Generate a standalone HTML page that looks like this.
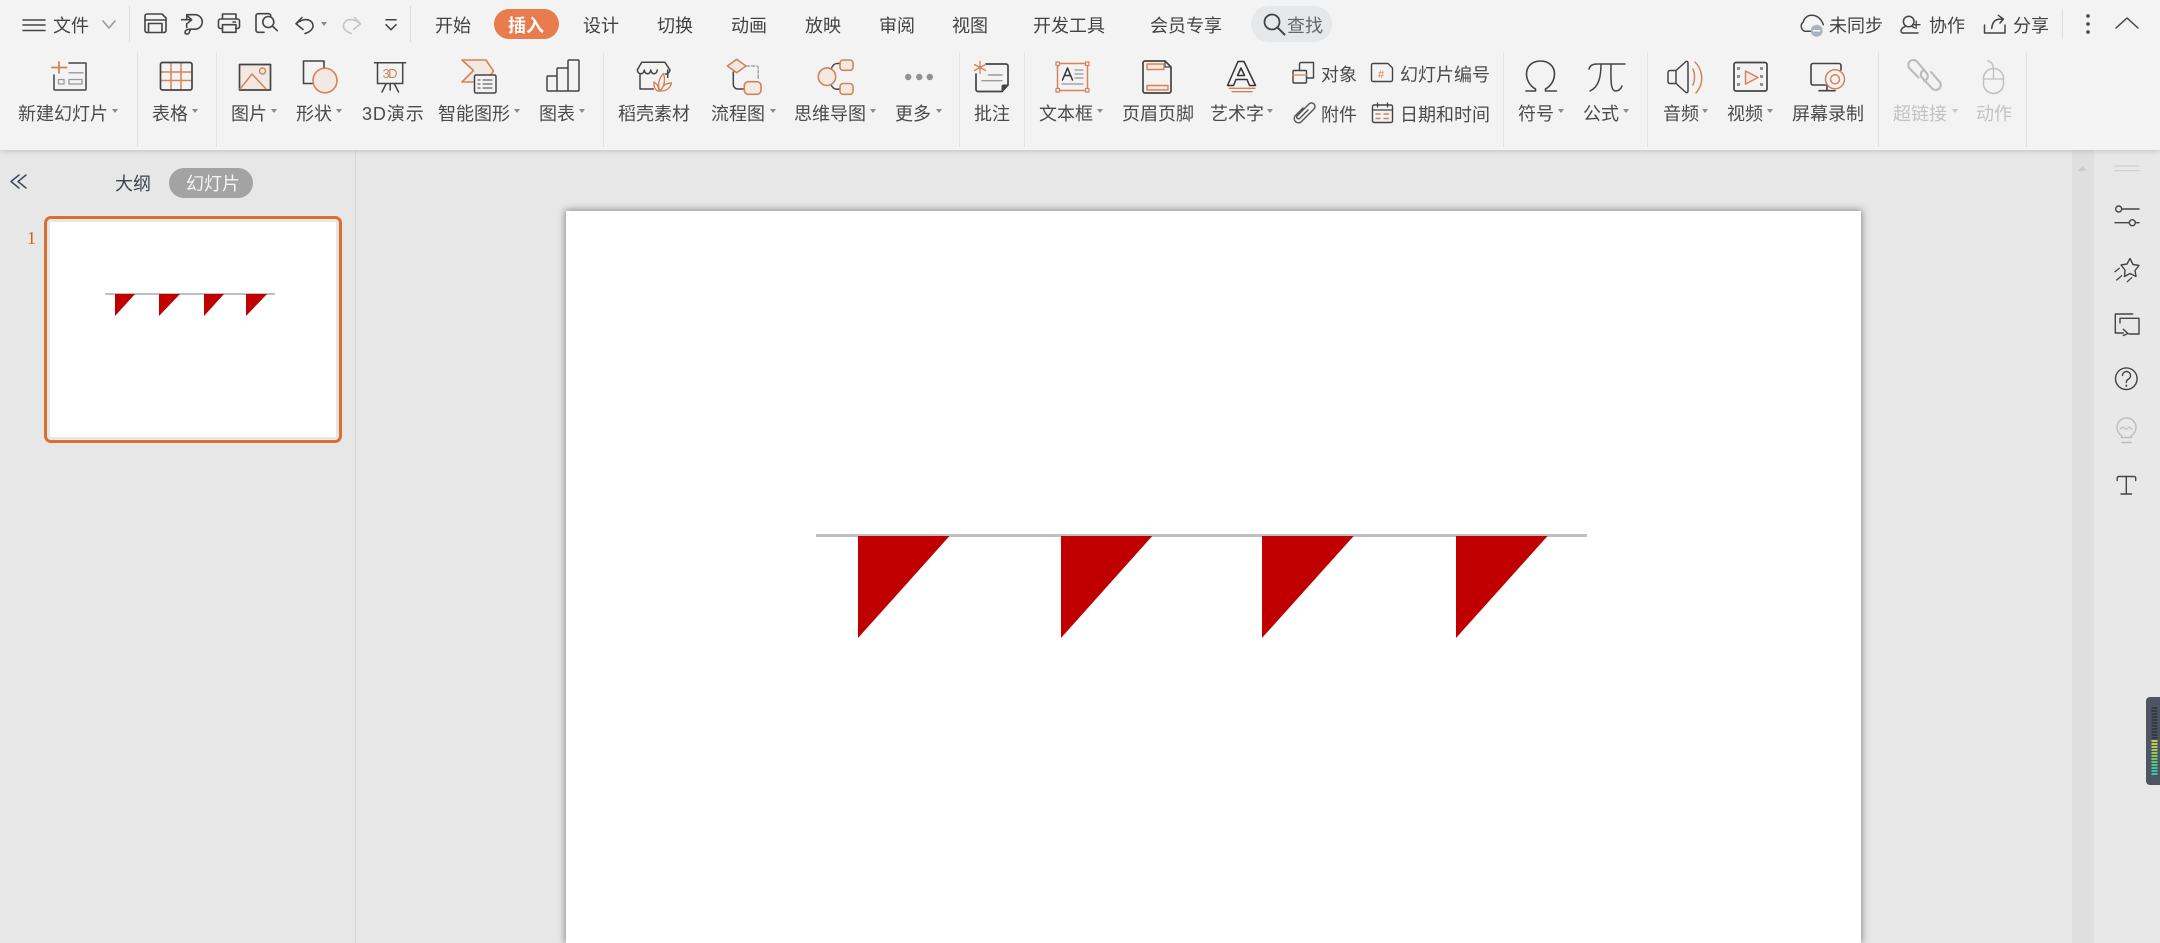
<!DOCTYPE html>
<html lang="zh-CN">
<head>
<meta charset="utf-8">
<title>WPS 演示</title>
<style>
html,body{margin:0;padding:0;width:2160px;height:943px;overflow:hidden;background:#e7e7e7;font-family:"Liberation Sans","Noto Sans CJK SC",sans-serif}
#bar{position:absolute;left:0;top:0;width:2160px;height:150px;background:#f3f3f3;box-shadow:0 1px 5px rgba(0,0,0,.16);z-index:2}
.t{position:absolute;font-size:18px;line-height:24px;white-space:nowrap;color:#4a4a4a;z-index:4}
.r{top:102px}
.g{color:#c2c2c2}
.tb{top:14px;color:#424242}
.a{position:absolute;top:109px;width:0;height:0;border-left:3.5px solid transparent;border-right:3.5px solid transparent;border-top:4px solid #8a8a8a;z-index:4}
.s{position:absolute;top:52px;height:95px;width:1px;background:#e3e3e3;z-index:3}
.s2{position:absolute;top:6px;height:36px;width:1px;background:#dedede;z-index:3}
.pill{position:absolute;z-index:3}
#ic{position:absolute;left:0;top:0;z-index:5}
#slide{position:absolute;left:566px;top:211px;width:1295px;height:732px;background:#fff;box-shadow:0 0 7px 1px #8a8a8a}
#sb{position:absolute;left:2072px;top:150px;width:22px;height:793px;background:#dfdfdf}
#rp{position:absolute;left:2094px;top:150px;width:66px;height:793px;background:#e8e8e8}
#lp{position:absolute;left:355px;top:150px;width:1px;height:793px;background:#d9d9d9}
#th{position:absolute;left:44px;top:216px;width:292px;height:221px;border:3px solid #dc6e2e;border-radius:7px;background:#fff;box-shadow:inset 0 0 0 3px #e7e7e7}
</style>
</head>
<body>
<div id="lp"></div>
<div id="sb"></div>
<div id="rp"></div>
<div id="slide"></div>
<div id="th"></div>

<div id="bar"></div>

<div class="s2" style="left:129px"></div>
<div class="s2" style="left:410px"></div>
<div class="s2" style="left:2062px;top:9px;height:30px"></div>
<div class="s" style="left:137px"></div>
<div class="s" style="left:216px"></div>
<div class="s" style="left:603px"></div>
<div class="s" style="left:959px"></div>
<div class="s" style="left:1024px"></div>
<div class="s" style="left:1503px"></div>
<div class="s" style="left:1647px"></div>
<div class="s" style="left:1878px"></div>
<div class="s" style="left:2026px"></div>

<div class="pill" style="left:494px;top:9px;width:65px;height:30px;border-radius:15px;background:#e97c4d"></div>
<div class="pill" style="left:1251px;top:6px;width:81px;height:36px;border-radius:18px;background:#e6e7e9"></div>
<div class="pill" style="left:169px;top:168px;width:84px;height:30px;border-radius:15px;background:#a3a3a3"></div>

<span class="t tb" style="left:53px">文件</span>
<span class="t tb" style="left:435px">开始</span>
<span class="t tb" style="left:508px;color:#fff;font-weight:700">插入</span>
<span class="t tb" style="left:583px">设计</span>
<span class="t tb" style="left:657px">切换</span>
<span class="t tb" style="left:731px">动画</span>
<span class="t tb" style="left:805px">放映</span>
<span class="t tb" style="left:879px">审阅</span>
<span class="t tb" style="left:952px">视图</span>
<span class="t tb" style="left:1033px">开发工具</span>
<span class="t tb" style="left:1150px">会员专享</span>
<span class="t tb" style="left:1287px;color:#666">查找</span>
<span class="t tb" style="left:1829px">未同步</span>
<span class="t tb" style="left:1929px">协作</span>
<span class="t tb" style="left:2013px">分享</span>

<span class="t r" style="left:18px">新建幻灯片</span>
<span class="t r" style="left:152px">表格</span>
<span class="t r" style="left:231px">图片</span>
<span class="t r" style="left:296px">形状</span>
<span class="t r" style="left:362px;letter-spacing:.9px">3D演示</span>
<span class="t r" style="left:438px">智能图形</span>
<span class="t r" style="left:539px">图表</span>
<span class="t r" style="left:618px">稻壳素材</span>
<span class="t r" style="left:711px">流程图</span>
<span class="t r" style="left:794px">思维导图</span>
<span class="t r" style="left:895px">更多</span>
<span class="t r" style="left:974px">批注</span>
<span class="t r" style="left:1039px">文本框</span>
<span class="t r" style="left:1122px">页眉页脚</span>
<span class="t r" style="left:1210px">艺术字</span>
<span class="t" style="left:1321px;top:63px">对象</span>
<span class="t" style="left:1321px;top:103px">附件</span>
<span class="t" style="left:1400px;top:63px">幻灯片编号</span>
<span class="t" style="left:1400px;top:103px">日期和时间</span>
<span class="t r" style="left:1518px">符号</span>
<span class="t r" style="left:1583px">公式</span>
<span class="t r" style="left:1663px">音频</span>
<span class="t r" style="left:1727px">视频</span>
<span class="t r" style="left:1792px">屏幕录制</span>
<span class="t r g" style="left:1893px">超链接</span>
<span class="t r g" style="left:1976px">动作</span>

<span class="a" style="left:112px"></span>
<span class="a" style="left:192px"></span>
<span class="a" style="left:271px"></span>
<span class="a" style="left:336px"></span>
<span class="a" style="left:514px"></span>
<span class="a" style="left:579px"></span>
<span class="a" style="left:770px"></span>
<span class="a" style="left:870px"></span>
<span class="a" style="left:936px"></span>
<span class="a" style="left:1097px"></span>
<span class="a" style="left:1267px"></span>
<span class="a" style="left:1558px"></span>
<span class="a" style="left:1623px"></span>
<span class="a" style="left:1702px"></span>
<span class="a" style="left:1767px"></span>
<span class="a" style="left:1952px;border-top-color:#c8c8c8"></span>
<span class="a" style="left:321px;top:22px"></span>

<span class="t" style="left:115px;top:172px;color:#3d4450">大纲</span>
<span class="t" style="left:186px;top:172px;color:#f4f4f4">幻灯片</span>
<span class="t" style="left:27px;top:226px;color:#d0601e;font-family:'Liberation Serif',serif;font-size:18px">1</span>

<svg id="ic" width="2160" height="943" viewBox="0 0 2160 943" xmlns="http://www.w3.org/2000/svg" fill="none" stroke-linecap="round" stroke-linejoin="round">
<!-- slide content -->
<rect x="816" y="534" width="771" height="3" fill="#bfbfbf"/>
<g fill="#c00000">
<polygon points="858,536 949.5,536 858,638"/>
<polygon points="1061,536 1152.3,536 1061,638"/>
<polygon points="1262,536 1353.7,536 1262,638"/>
<polygon points="1456,536 1547.6,536 1456,638"/>
</g>
<!-- thumbnail content -->
<rect x="105" y="293" width="170" height="2" fill="#bfbfbf"/>
<g fill="#c00000">
<polygon points="115,294 135,294 115,316"/>
<polygon points="159,294 180,294 159,316"/>
<polygon points="204,294 224,294 204,316"/>
<polygon points="246,294 267,294 246,316"/>
</g>
<path d="M19,175l-8,6.5 8,6.5M26,175l-8,6.5 8,6.5" stroke="#3d4a60" stroke-width="1.5"/>

<!-- top bar -->
<g stroke="#444" stroke-width="1.6">
<path d="M23,20H45M23,25H45M23,30.500H45"/>
<path d="M103,21l6,7 6-7" stroke="#999"/>
<path d="M147,14h15l4,4v12.500a2,2 0 0 1-2,2H147a2,2 0 0 1-2-2V16a2,2 0 0 1 2-2z"/>
<path d="M145,20h21M148.500,32V23.500h13.500V32"/>
<path d="M186.700,18.500V14.700H195a7.200,7.200 0 0 1 0,14.500H190c-2.500,0-4.700,1-5,3-.2,2 3,2.500 4,.8l1.500-3.800M181.700,19.700h10M188,16.500l3.700,3.200-3.700,3.200M186.700,23.500v4"/>
<path d="M222.500,19V14h13.500v5M222.500,28.500h-2a2,2 0 0 1-2-2V21a2,2 0 0 1 2-2h17a2,2 0 0 1 2,2v5.500a2,2 0 0 1-2,2h-2M222.500,24.700h13.500v7.600H222.500zM233,22h2.500"/>
<path d="M264,32.300h-6a2,2 0 0 1-2-2V15.700a2,2 0 0 1 2-2h10.700a2,2 0 0 1 2,2V17"/>
<circle cx="268.300" cy="22" r="5.500"/>
<path d="M272.300,26l5,4.700"/>
<path d="M302,17.500l-6,6.200 7,5.800M296,23.700c2-1.500 4.500-3 7-3.700 5-1.500 10,1 10,6 0,3-3,6-8,7.500"/>
<path d="M386,19.700h10M386,24.700l5,5 5-5" stroke-width="1.500"/>
</g>
<path d="M354.500,17.500l6,6.200-7,5.800M360.500,23.700c-2-1.500-4.500-3-7-3.700-5-1.500-10,1-10,6 0,3 3,6 8,7.500" stroke="#c6c6c6" stroke-width="1.600"/>
<circle cx="1272" cy="22" r="7.500" stroke="#444" stroke-width="1.800"/>
<path d="M1277.500,27.500l7,7" stroke="#444" stroke-width="2"/>

<g stroke="#444" stroke-width="1.500">
<path d="M1811.700,31.300H1805a5.300,5.300 0 0 1-1.700-9.300c.8-4 4.200-6.700 8.400-6.700 5.700,0 9.800,3.800 11.600,9.400"/>
<circle cx="1908.700" cy="21.500" r="5.300"/>
<path d="M1918,33h-15a2,2 0 0 1-2-2c0-2 2-4 5-4.800M1911.500,26.300c1,.3 2,.8 3,1.500"/>
<path d="M1912.500,24.700h7.500M1916.200,21v7.500" stroke-width="1.300"/>
<path d="M1984.500,25v8h20.500v-8"/>
<path d="M1991.700,28.500c.5-5 2.500-8 5.500-9 2-.6 4-.5 6-.5M1998.300,15.300l5,3.700-3.300,4"/>
</g>
<circle cx="1816.700" cy="30.700" r="6" fill="#a9b2c3"/>
<path d="M1813.700,30.700h6" stroke="#fff" stroke-width="1.500"/>
<g fill="#444"><circle cx="2088" cy="16" r="1.800"/><circle cx="2088" cy="24" r="1.800"/><circle cx="2088" cy="32" r="1.800"/></g>
<path d="M2116,28l11-10 11,10" stroke="#444" stroke-width="1.500"/>

<!-- 新建幻灯片 -->
<path d="M52,67.500h14.500M59,62v11" stroke="#d4835a" stroke-width="1.800"/>
<path d="M54,75v14a1,1 0 0 0 1,1H85a1,1 0 0 0 1-1V63H69" stroke="#444" stroke-width="1.500"/>
<path d="M69,72.800H83" stroke="#999" stroke-width="1.400"/>
<rect x="58.500" y="79.500" width="5.500" height="4.500" stroke="#999" stroke-width="1.300"/>
<rect x="69" y="79.500" width="13" height="4.500" stroke="#999" stroke-width="1.300"/>
<!-- 表格 -->
<path d="M160.500,72H191.500M160.500,80.500H191.500M171,63V89.500M181,63V89.500" stroke="#d4835a" stroke-width="1.500"/>
<rect x="160.500" y="62.500" width="31.500" height="27.500" rx="2" stroke="#444" stroke-width="1.700"/>
<!-- 图片 -->
<rect x="239.500" y="64.500" width="31" height="25.500" fill="#f2e9e3" stroke="#444" stroke-width="1.700"/>
<path d="M240,89l12-15 14,15" stroke="#d4835a" stroke-width="1.500"/>
<circle cx="262.500" cy="71" r="3" stroke="#d4835a" stroke-width="1.400"/>
<!-- 形状 -->
<path d="M313,83.500H303.500V61H324V68" stroke="#444" stroke-width="1.600"/>
<ellipse cx="325" cy="80.500" rx="12" ry="12.300" fill="#f2e9e3" stroke="#d4835a" stroke-width="1.600"/>
<!-- 3D -->
<path d="M374.500,62.700H405.500M377.500,63V83.500H402.700V63M386,84l-4,8M394.500,84l4,8M390.200,84v6" stroke="#444" stroke-width="1.500"/>
<text x="382.500" y="78" font-size="13" fill="#d4835a" font-family="Liberation Sans,sans-serif" textLength="15">3D</text>
<!-- 智能图形 -->
<path d="M462,60h24l7.500,11-7.500,11H462l11.500-11.500z" fill="#f2e9e3" stroke="#d4835a" stroke-width="1.600"/>
<rect x="474.500" y="75" width="21.500" height="18" rx="1.500" fill="#f3f3f3" stroke="#444" stroke-width="1.500"/>
<path d="M478,80h2M483,80h9M478,84h2M483,84h9M478,88h2M483,88h9" stroke="#666" stroke-width="1.200"/>
<!-- 图表 -->
<path d="M556.500,76H548a1,1 0 0 0-1,1V90a1,1 0 0 0 1,1H578a1,1 0 0 0 1-1V61a1,1 0 0 0-1-1H569a1,1 0 0 0-1,1V68H558a1,1 0 0 0-1,1V91M568,68V91" stroke="#444" stroke-width="1.500"/>
<!-- 稻壳 -->
<path d="M640,75V89H653.300M667.700,70v7.500M637.300,70L641.700,62.300H665L670,70M637.300,70c.5,5 6.500,5 7,0 .5,5 6,5 6.500,0 .5,5 6,5 6.500,0M670,70c-.5,3-2.500,4.200-4.500,4" stroke="#444" stroke-width="1.500"/>
<path d="M660,91c-3-6-1-13 3.500-17.500 2,6 1,13-3.500,17.500zM659,91c-4,0-5.500-5-5-9 3,2 5,5 5,9zM661,91c1-5 5-8 10.500-8-1,5-5,8-10.500,8z" fill="#f3f3f3" stroke="#d4835a" stroke-width="1.400"/>
<!-- 流程图 -->
<path d="M746.700,66h10a1.500,1.500 0 0 1 1.500,1.500V80" stroke="#999" stroke-width="1.300" stroke-dasharray="3 2"/>
<path d="M733.300,72v12.500a4.500,4.500 0 0 0 4.500,4.500h6.700" stroke="#444" stroke-width="1.500"/>
<path d="M736.700,59.300l9.300,6.700-9.300,6.700-9.300-6.700z" fill="#f2e9e3" stroke="#d4835a" stroke-width="1.600"/>
<rect x="744.300" y="81.700" width="16.700" height="12.600" rx="4" fill="#f2e9e3" stroke="#d4835a" stroke-width="1.600"/>
<!-- 思维导图 -->
<path d="M831,69c2-4 3-6 9-5.500M831,85c2,3 3,5 9,4" stroke="#444" stroke-width="1.400"/>
<ellipse cx="827" cy="76.700" rx="8.700" ry="8.800" fill="#f2e9e3" stroke="#d4835a" stroke-width="1.600"/>
<rect x="840" y="60" width="13" height="10.300" rx="3" fill="#f2e9e3" stroke="#d4835a" stroke-width="1.600"/>
<rect x="840" y="83.500" width="13" height="10.800" rx="3" fill="#f2e9e3" stroke="#d4835a" stroke-width="1.600"/>
<!-- 更多 -->
<g fill="#919191"><circle cx="908.200" cy="77" r="3.200"/><circle cx="919.300" cy="77" r="3.200"/><circle cx="929.800" cy="77" r="3.200"/></g>
<!-- 批注 -->
<path d="M986,64h20a2,2 0 0 1 2,2V85l-6,6.500H978a2,2 0 0 1-2-2V74" stroke="#444" stroke-width="1.700"/>
<path d="M1008,85l-6,6.500v-5a1.500,1.500 0 0 1 1.500-1.500z" fill="#444" stroke="#444"/>
<path d="M988.500,75H1002M982,80.700h20" stroke="#999" stroke-width="1.400"/>
<path d="M980,61.500v12M974.500,64.500l11,6M985.500,64.500l-11,6" stroke="#d4835a" stroke-width="1.300"/>
<!-- 文本框 -->
<rect x="1057.500" y="63.500" width="30" height="27" stroke="#d4835a" stroke-width="1.500"/>
<g fill="#f3f3f3" stroke="#d4835a" stroke-width="1.200"><rect x="1056" y="62" width="3.500" height="3.500"/><rect x="1085.500" y="62" width="3.500" height="3.500"/><rect x="1056" y="88.500" width="3.500" height="3.500"/><rect x="1085.500" y="88.500" width="3.500" height="3.500"/></g>
<path d="M1062.500,80l5-12 5,12M1064.500,75.500h6" stroke="#333" stroke-width="1.500"/>
<path d="M1075,70h8M1075,74h8M1075,78h8M1062,84h21" stroke="#999" stroke-width="1.300"/>
<!-- 页眉页脚 -->
<path d="M1145,61h20l6,6V91a2,2 0 0 1-2,2H1145a2,2 0 0 1-2-2V63a2,2 0 0 1 2-2z" stroke="#444" stroke-width="1.700"/>
<path d="M1165,61v6h6" stroke="#444" stroke-width="1.200"/>
<rect x="1147" y="64" width="17" height="5.500" fill="#f2e9e3" stroke="#d4835a" stroke-width="1.400"/>
<rect x="1147" y="85.500" width="21" height="4.500" fill="#f2e9e3" stroke="#d4835a" stroke-width="1.400"/>
<!-- 艺术字 -->
<path d="M1238,61.500h6l11.500,24h-6l-2.500-6h-11l-2.500,6h-6zM1241,68l-3.500,7.500h7z" stroke="#333" stroke-width="1.500"/>
<path d="M1229,88.300h26M1232,91.700h20" stroke="#d4835a" stroke-width="1.300"/>
<!-- 对象 -->
<path d="M1299.500,70v-6a1.500,1.500 0 0 1 1.500-1.500h12.500V78h-7" stroke="#444" stroke-width="1.400"/>
<rect x="1293" y="70.500" width="13.500" height="12.500" rx="1" stroke="#444" stroke-width="1.400"/>
<path d="M1293,75h13.500" stroke="#d4835a" stroke-width="1.300"/>
<!-- 编号 -->
<path d="M1373,63.500h15l4.500,4.500V80a1.500,1.500 0 0 1-1.500,1.500H1373a1.500,1.500 0 0 1-1.500-1.500V65a1.500,1.500 0 0 1 1.500-1.500z" stroke="#444" stroke-width="1.400"/>
<text x="1378" y="78" font-size="11" fill="#d4835a" font-family="Liberation Sans,sans-serif">#</text>
<!-- 附件 -->
<path d="M1303,108l-8,8a4.300,4.300 0 0 0 6,6l13-13a3.500,3.500 0 0 0-5-5l-12,12a1.800,1.800 0 0 0 2.500,2.500l8.500-8.500" stroke="#555" stroke-width="1.400"/>
<!-- 日期 -->
<rect x="1372.500" y="105" width="20" height="17.500" rx="1.500" stroke="#444" stroke-width="1.400"/>
<path d="M1377.500,103v4M1387.500,103v4M1372.500,110h20" stroke="#444" stroke-width="1.300"/>
<path d="M1376,114h4M1384,114h4.500M1376,118.500h4M1384,118.500h4.500" stroke="#d4835a" stroke-width="1.400"/>
<!-- Omega -->
<path d="M1526,91h9.500v-2c-5.500-3-9-9-9-15 0-8 6-13 14-13s14,5 14,13c0,6-3.500,12-9,15v2h11" stroke="#444" stroke-width="1.600"/>
<!-- Pi -->
<path d="M1589,69c1-4 4-5 8-5h28M1601,64c0,12-2,23-11,27M1611,64c0,13-1,26 4,27 4,0 6-2 7-5" stroke="#444" stroke-width="1.500"/>
<!-- 音频 -->
<path d="M1668,72.500a2,2 0 0 1 2-2h6l10-9c1.500-.5 2,.5 2,1.500v28c0,1-.5,2-2,1.500l-10-9h-6a2,2 0 0 1-2-2zM1676,70.500v13" stroke="#444" stroke-width="1.500"/>
<path d="M1693,69c2,5 2,11 0,16" stroke="#d4835a" stroke-width="1.500"/>
<path d="M1695,62c6,6 11,19 1,31" stroke="#d4835a" stroke-width="1.500"/>
<!-- 视频 -->
<rect x="1734" y="62.500" width="33" height="28.500" rx="2" stroke="#444" stroke-width="1.700"/>
<g fill="#8f8f8f"><rect x="1737" y="67" width="3" height="3"/><rect x="1737" y="75" width="3" height="3"/><rect x="1737" y="83" width="3" height="3"/><rect x="1760" y="67" width="3" height="3"/><rect x="1760" y="75" width="3" height="3"/><rect x="1760" y="83" width="3" height="3"/></g>
<path d="M1745.500,71l12.500,6.500-12.500,6.500z" fill="#f2e9e3" stroke="#d4835a" stroke-width="1.500"/>
<!-- 屏幕录制 -->
<path d="M1826,85h-13a2,2 0 0 1-2-2V65.500a2,2 0 0 1 2-2h26a2,2 0 0 1 2,2V70M1827,85v5.500M1819,90.700h16" stroke="#444" stroke-width="1.600"/>
<circle cx="1835" cy="79.300" r="9.500" fill="#f3f3f3" stroke="#d4835a" stroke-width="1.500"/>
<circle cx="1835" cy="79.300" r="4.500" stroke="#d4835a" stroke-width="1.500"/>
<!-- 超链接 -->
<path d="M1918.500,77.500L1909.500,68.300A5,5 0 0 1 1917.100,61.700L1927,73.500A5,5 0 0 1 1924,81" stroke="#bdbdbd" stroke-width="2.200"/>
<path d="M1924,70A5,5 0 0 0 1921.300,76.700L1932,88.400A5,5 0 0 0 1939.400,81.600L1931,72" stroke="#bdbdbd" stroke-width="2.200"/>
<!-- 动作 -->
<path d="M1993.300,68.500c0-4-2-7-5.500-7.500" stroke="#c0c0c0" stroke-width="1.400"/>
<rect x="1983.500" y="68.500" width="20" height="25" rx="10" stroke="#c0c0c0" stroke-width="1.500"/>
<path d="M1984,79h19M1993.500,68.500V79" stroke="#c0c0c0" stroke-width="1.300"/>

<!-- scrollbar arrow -->
<polygon points="2082.500,166 2087,171 2078,171" fill="#cbcbcb"/>
<!-- right panel -->
<path d="M2115,166h24M2115,170.700h24" stroke="#cdcdcd" stroke-width="1.200"/>
<g stroke="#444" stroke-width="1.400">
<circle cx="2118.700" cy="209" r="3"/>
<path d="M2122,209h17M2115,222.700h14M2135.500,222.700h3.500"/>
<circle cx="2132.300" cy="222.700" r="3"/>
<path d="M2130,258.500l3,6 6,1-4,5 1,6-6-3-5.500,3 .5-6.500-4-5 6-1z"/>
<path d="M2115,271.700l4.300-3.400M2116.700,280l5-4.300M2127.300,281.700l4.400-4" stroke-width="1.300"/>
<path d="M2132.700,314h-17.400V333h8M2120,323v-4.700h19V334h-10M2123.300,329.300l4.700,4.200-4.700,2"/>
<circle cx="2126.300" cy="378.700" r="10.800"/>
<path d="M2122.500,375.500a4,4 0 1 1 6,3.500c-1.500,1-2.200,1.800-2.200,3.500"/>
<path d="M2126.300,385.500v.5" stroke-width="1.800"/>
<path d="M2117.200,480.500v-2.500a1.500,1.500 0 0 1 1.500-1.500h15.500a1.500,1.500 0 0 1 1.500,1.500v2.500M2126.300,476.500V494M2121,494h10.500"/>
</g>
<g stroke="#bcbcbc" stroke-width="1.400">
<path d="M2121.500,435.500a9.500,9.500 0 1 1 10,0v2h-10zM2122,442.500h9"/>
<path d="M2120,429l3-2 3,2.500 3-2.500 3,2" stroke-width="1.100"/>
</g>

<!-- meter widget -->
<path d="M2160,697h-10a4,4 0 0 0-4,4v80a4,4 0 0 0 4,4h10z" fill="#4d5562"/>
<g fill="#343a44">
<rect x="2151.500" y="707" width="6" height="2"/><rect x="2151.500" y="710" width="6" height="2"/><rect x="2151.500" y="713" width="6" height="2"/><rect x="2151.500" y="716" width="6" height="2"/><rect x="2151.500" y="719" width="6" height="2"/><rect x="2151.500" y="722" width="6" height="2"/><rect x="2151.500" y="725" width="6" height="2"/><rect x="2151.500" y="728" width="6" height="2"/><rect x="2151.500" y="731" width="6" height="2"/><rect x="2151.500" y="734" width="6" height="2"/><rect x="2151.500" y="737" width="6" height="2"/>
</g>
<rect x="2151.500" y="740" width="6" height="2" fill="#c4cc4a"/>
<rect x="2151.500" y="743" width="6" height="2" fill="#bccb4e"/>
<rect x="2151.500" y="746" width="6" height="2" fill="#aecb52"/>
<rect x="2151.500" y="749" width="6" height="2" fill="#a0ca58"/>
<rect x="2151.500" y="752" width="6" height="2" fill="#90c95e"/>
<rect x="2151.500" y="755" width="6" height="2" fill="#80c866"/>
<rect x="2151.500" y="758" width="6" height="2" fill="#70c770"/>
<rect x="2151.500" y="761" width="6" height="2" fill="#60c67c"/>
<rect x="2151.500" y="764" width="6" height="2" fill="#50c688"/>
<rect x="2151.500" y="767" width="6" height="2" fill="#44c596"/>
<rect x="2151.500" y="770" width="6" height="2" fill="#3cc4a2"/>
<rect x="2151.500" y="773" width="6" height="2" fill="#38c4aa"/>
</svg>
</body>
</html>
